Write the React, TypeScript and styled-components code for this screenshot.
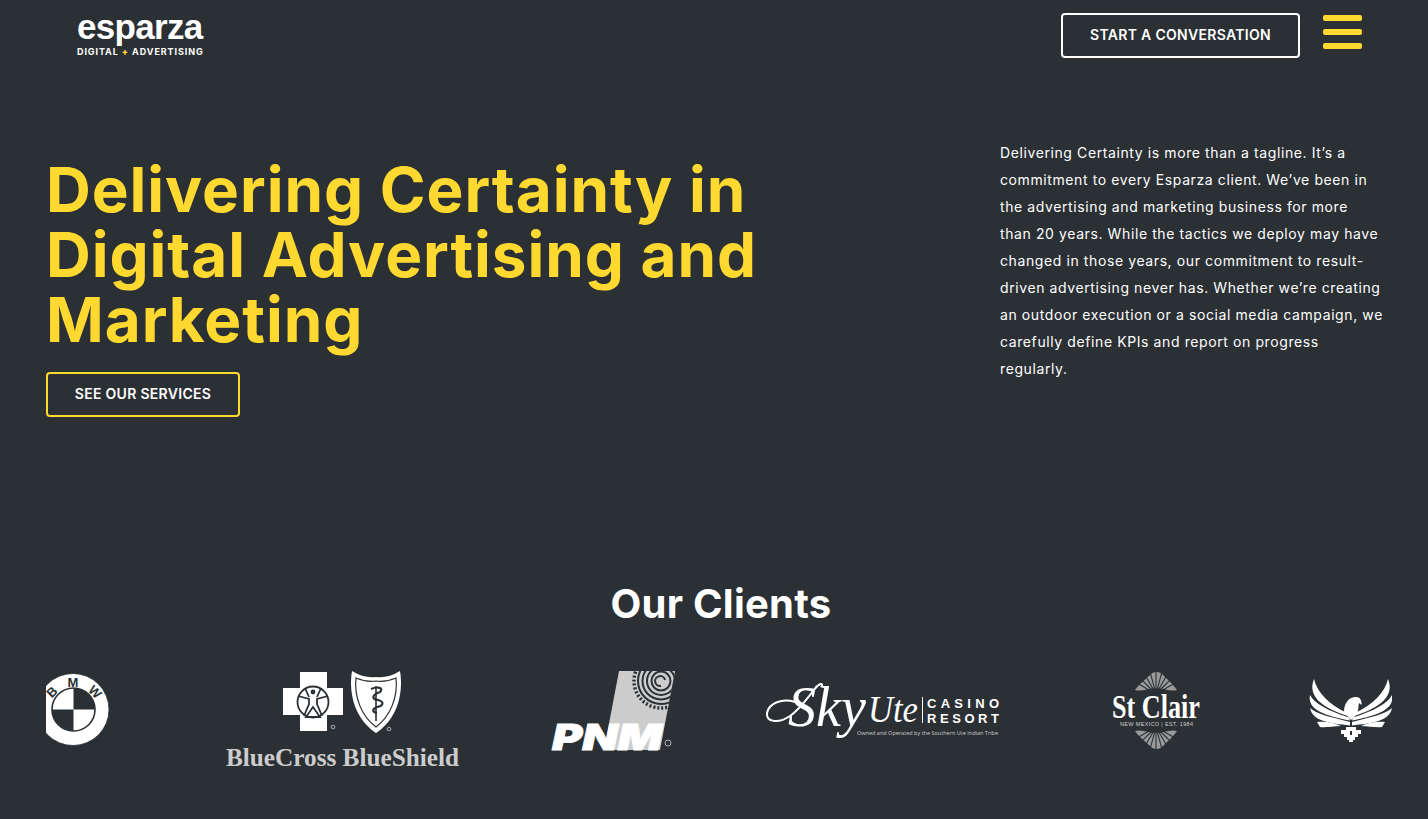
import React from 'react';
import styled, { createGlobalStyle } from 'styled-components';

const BG = '#2b3035';
const YELLOW = '#ffd92f';
const GRAY = '#cccccc';

const GlobalStyle = createGlobalStyle`
  html, body {
    margin: 0;
    padding: 0;
    background: ${BG};
  }
  * {
    box-sizing: border-box;
  }
`;

const Page = styled.div`
  width: 1428px;
  height: 819px;
  overflow: hidden;
  background: ${BG};
  color: #fff;
  font-family: Inter, 'Liberation Sans', sans-serif;
`;

const Header = styled.header`
  display: flex;
  justify-content: space-between;
  align-items: flex-start;
  padding: 13px 66px 0 77px;
  height: 139px;
`;

const Brand = styled.a`
  display: flex;
  flex-direction: column;
  width: 128px;
`;

const BrandName = styled.span`
  font-family: 'Liberation Sans', sans-serif;
  font-size: 35px;
  font-weight: 700;
  line-height: 28px;
  letter-spacing: -0.7px;
  color: #fff;
`;

const BrandTag = styled.span`
  margin-top: 6px;
  font-size: 9px;
  font-weight: 700;
  line-height: 10px;
  letter-spacing: 0.92px;
  white-space: nowrap;
  b {
    color: ${YELLOW};
  }
`;

const HeaderActions = styled.div`
  display: flex;
  align-items: flex-start;
  gap: 23px;
`;

const OutlineButton = styled.a<{ $accent: string; $width: number }>`
  display: flex;
  align-items: center;
  justify-content: center;
  width: ${(p) => p.$width}px;
  height: 45px;
  padding-bottom: 2px;
  border: 2px solid ${(p) => p.$accent};
  border-radius: 4px;
  color: #fff;
  font-size: 14px;
  font-weight: 600;
  letter-spacing: 0.3px;
  white-space: nowrap;
`;

const Burger = styled.button`
  display: flex;
  flex-direction: column;
  gap: 8px;
  width: 39px;
  margin-top: 2px;
  padding: 0;
  border: 0;
  background: none;
  span {
    display: block;
    height: 6px;
    border-radius: 2px;
    background: ${YELLOW};
  }
`;

const Hero = styled.section`
  display: flex;
  justify-content: space-between;
  padding: 0 36px 0 46px;
  height: 440px;
`;

const HeroLeft = styled.div`
  width: 760px;
  padding-top: 18px;
`;

const Headline = styled.h1`
  margin: 0 0 20px;
  font-size: 62px;
  font-weight: 700;
  line-height: 65px;
  letter-spacing: 0.95px;
  color: ${YELLOW};
`;

const Lede = styled.p`
  width: 392px;
  margin: 0;
  font-size: 14px;
  line-height: 27px;
  letter-spacing: 0.6px;
  color: #fff;
`;

const Clients = styled.section`
  display: flex;
  flex-direction: column;
  padding: 0 36px 0 46px;
`;

const ClientsTitle = styled.h2`
  margin: 0 0 41px;
  padding-left: 4px;
  text-align: center;
  font-size: 40px;
  font-weight: 700;
  line-height: 50px;
  letter-spacing: 0.25px;
  color: #fff;
`;

const Strip = styled.div`
  overflow: hidden;
`;

const Track = styled.div`
  display: flex;
  align-items: flex-start;
  margin-left: -9px;
`;

const LogoSlot = styled.svg<{ $gap: number }>`
  display: block;
  flex: none;
  height: 100px;
  margin-left: ${(p) => p.$gap}px;
  overflow: visible;
`;

const FAN_RAYS = [-60, -45, -30, -15, 0, 15, 30, 45, 60];

function BmwLogo() {
  const letter = {
    fill: BG,
    fontFamily: "'Liberation Sans', sans-serif",
    fontWeight: 700,
    fontSize: 13,
    textAnchor: 'middle' as const,
    y: 4.5,
  };
  return (
    <LogoSlot $gap={0} width="74" viewBox="37 670 74 100">
      <circle cx="73" cy="709.500" r="36" fill="#fff" stroke={BG} strokeWidth="0.800" />
      <circle cx="73.500" cy="709.500" r="21.500" fill="#fff" stroke={BG} strokeWidth="1.600" />
      <path d="M73.500 709.500 V688 A21.500 21.500 0 0 1 95 709.500 Z" fill={BG} />
      <path d="M73.500 709.500 V731 A21.500 21.500 0 0 1 52 709.500 Z" fill={BG} />
      <text {...letter} transform="translate(52 692) rotate(-45)">B</text>
      <text {...letter} transform="translate(73 682.500)">M</text>
      <text {...letter} transform="translate(95 692) rotate(45)">W</text>
    </LogoSlot>
  );
}

function BlueCrossLogo() {
  return (
    <LogoSlot $gap={115} width="235" viewBox="226 670 235 100">
      <path d="M300 672 H327 V688 H343 V715 H327 V731 H300 V715 H283 V688 H300 Z" fill="#fff" />
      <circle cx="313" cy="702" r="15.500" fill="#fff" stroke={BG} strokeWidth="1.800" />
      <g stroke={BG} strokeWidth="1.800" fill="none">
        <path d="M298 696 L309 699 V704 L304 716 M328 696 L317 699 V704 L322 716" />
        <path d="M305 688 L309 697 M321 688 L317 697" />
        <path d="M313 707 L306 717 H320 Z" />
      </g>
      <circle cx="313" cy="692" r="2.400" fill={BG} />
      <circle cx="333" cy="727" r="1.800" fill="none" stroke={GRAY} strokeWidth="0.800" />
      <path d="M352 671 C360 676 368 678 376 677 C384 678 392 676 400 671 C404 695 396 720 376 733 C356 720 348 695 352 671 Z" fill="#fff" />
      <path d="M356 678 C363 681 370 682 376 681 C382 682 389 681 396 678 C398 696 391 716 376 727 C361 716 354 696 356 678 Z" fill="none" stroke={BG} strokeWidth="1.200" />
      <path d="M371 689 C378 686 384 688 380 692 C372 695 371 699 378 700 C385 702 383 706 377 707 C372 709 372 712 377 713" fill="none" stroke={BG} strokeWidth="2.200" />
      <path d="M376 686 V721" stroke={BG} strokeWidth="1.600" />
      <circle cx="389" cy="729" r="1.800" fill="none" stroke={GRAY} strokeWidth="0.800" />
      <text x="226" y="766" fill={GRAY} fontFamily="'Liberation Serif', serif" fontWeight="700" fontSize="26" textLength="233" lengthAdjust="spacingAndGlyphs">
        BlueCross BlueShield
      </text>
    </LogoSlot>
  );
}

function PnmLogo() {
  return (
    <LogoSlot $gap={89} width="125" viewBox="550 670 125 100">
      <defs>
        <clipPath id="pnm-band">
          <path d="M619 671 H675 L660 750 H604 Z" />
        </clipPath>
      </defs>
      <path d="M619 671 H675 L660 750 H604 Z" fill={GRAY} />
      <g clipPath="url(#pnm-band)" fill="none" stroke={BG}>
        <circle cx="661" cy="681" r="27" strokeWidth="3.500" strokeDasharray="2 2" />
        <circle cx="661" cy="681" r="23" strokeWidth="2" />
        <circle cx="661" cy="681" r="18.500" strokeWidth="2" />
        <circle cx="661" cy="681" r="14" strokeWidth="2" />
        <circle cx="661" cy="681" r="9.500" strokeWidth="2" />
        <path d="M661 686 A5 5 0 1 1 665 680" strokeWidth="2" />
      </g>
      <text x="552" y="750" fill="#fff" stroke="#fff" strokeWidth="0.800" fontFamily="Inter, sans-serif" fontWeight="900" fontStyle="italic" fontSize="36" textLength="110" lengthAdjust="spacingAndGlyphs">
        PNM
      </text>
      <circle cx="668" cy="743" r="3" fill="none" stroke={GRAY} strokeWidth="0.800" />
    </LogoSlot>
  );
}

function SkyUteLogo() {
  return (
    <LogoSlot $gap={90} width="236" viewBox="765 670 236 100">
      <path d="M795 702 C782 698 769 703 767 713 C766 722 778 724 790 716 C799 710 806 700 814 690 C818 684 823 682 822 686" fill="none" stroke="#fff" strokeWidth="2" />
      <text x="788" y="726" fill="#fff" fontFamily="'Liberation Serif', serif" fontStyle="italic" fontSize="58" textLength="78" lengthAdjust="spacingAndGlyphs">
        Sky
      </text>
      <text x="868" y="722" fill="#fff" fontFamily="'Liberation Serif', serif" fontStyle="italic" fontSize="38" textLength="50" lengthAdjust="spacingAndGlyphs">
        Ute
      </text>
      <path d="M922.500 697 V723" stroke="#fff" strokeWidth="1" />
      <text x="927" y="708" fill="#fff" fontFamily="'Liberation Sans', sans-serif" fontWeight="700" fontSize="13" textLength="72">
        CASINO
      </text>
      <text x="927" y="723" fill="#fff" fontFamily="'Liberation Sans', sans-serif" fontWeight="700" fontSize="13" textLength="72">
        RESORT
      </text>
      <text x="857" y="734.500" fill={GRAY} fontFamily="'Open Sans', sans-serif" fontSize="5.500" textLength="141" lengthAdjust="spacingAndGlyphs">
        Owned and Operated by the Southern Ute Indian Tribe
      </text>
    </LogoSlot>
  );
}

function Fan({ flip }: { flip?: boolean }) {
  return (
    <g transform={flip ? 'translate(0 1421) scale(1 -1)' : undefined}>
      <path d="M1135 690 C1140 683 1146 679 1150 675 C1153 671 1160 671 1163 675 C1167 679 1172 683 1177 690 C1170 692 1163 688 1156 688 C1149 688 1142 692 1135 690 Z" fill="#9a9a9a" />
      {FAN_RAYS.map((a) => (
        <path key={a} d="M1156 688 V670" stroke={BG} strokeWidth="1.100" transform={`rotate(${a} 1156 694)`} />
      ))}
    </g>
  );
}

function StClairLogo() {
  return (
    <LogoSlot $gap={109} width="92" viewBox="1110 670 92 100">
      <Fan />
      <Fan flip />
      <text x="1112" y="718" fill="#fff" fontFamily="'Liberation Serif', serif" fontWeight="700" fontSize="34" textLength="88" lengthAdjust="spacingAndGlyphs">
        St Clair
      </text>
      <text x="1120" y="726" fill={GRAY} fontFamily="'Liberation Sans', sans-serif" fontSize="5.500" textLength="73">
        NEW MEXICO | EST. 1984
      </text>
    </LogoSlot>
  );
}

function EagleWing() {
  return (
    <g fill="#fff">
      <path d="M1314 679 C1317 692 1328 704 1347 713 L1348 716 C1322 708 1307 696 1314 679 Z" />
      <path d="M1310 695 C1314 703 1328 711 1349 717.500 L1350 720.500 C1326 716 1307 710 1310 695 Z" />
      <path d="M1310 708 C1316 714 1331 717 1350 722 L1350 725.500 C1330 723 1313 722 1310 708 Z" />
      <path d="M1317 722 C1326 721 1334 723 1341 726 C1333 726 1325 728 1320 727 Z" />
    </g>
  );
}

function EagleLogo() {
  return (
    <LogoSlot $gap={107} width="84" viewBox="1309 670 84 100">
      <EagleWing />
      <g transform="translate(2702 0) scale(-1 1)">
        <EagleWing />
      </g>
      <path d="M1344 712 C1344 703 1349 697 1356 697 C1360 697 1362 700 1361.500 705 L1359 703 C1358 707 1359 711 1356 715 L1351 720 Z" fill="#fff" />
      <path d="M1346 727 H1356 V730 H1361 V734 H1358 V737 H1355 V740 H1353 V742 H1349 V740 H1347 V737 H1344 V734 H1341 V730 H1346 Z" fill="#fff" />
      <path d="M1351 731 V735" stroke={BG} strokeWidth="2" />
    </LogoSlot>
  );
}

export default function App(): JSX.Element {
  return (
    <Page>
      <GlobalStyle />
      <Header>
        <Brand>
          <BrandName>esparza</BrandName>
          <BrandTag>
            DIGITAL <b>+</b> ADVERTISING
          </BrandTag>
        </Brand>
        <HeaderActions>
          <OutlineButton $accent="#fff" $width={239}>
            START A CONVERSATION
          </OutlineButton>
          <Burger aria-label="Menu">
            <span />
            <span />
            <span />
          </Burger>
        </HeaderActions>
      </Header>
      <Hero>
        <HeroLeft>
          <Headline>Delivering Certainty in Digital Advertising and Marketing</Headline>
          <OutlineButton $accent={YELLOW} $width={194}>
            SEE OUR SERVICES
          </OutlineButton>
        </HeroLeft>
        <Lede>
          Delivering Certainty is more than a tagline. It’s a commitment to every Esparza client.
          We’ve been in the advertising and marketing business for more
          <br />
          than 20 years. While the tactics we deploy may have changed in those years, our
          commitment to result-driven advertising never has. Whether we’re creating an outdoor
          execution or a social media campaign, we carefully define KPIs and report on progress
          <br />
          regularly.
        </Lede>
      </Hero>
      <Clients>
        <ClientsTitle>Our Clients</ClientsTitle>
        <Strip>
          <Track>
            <BmwLogo />
            <BlueCrossLogo />
            <PnmLogo />
            <SkyUteLogo />
            <StClairLogo />
            <EagleLogo />
          </Track>
        </Strip>
      </Clients>
    </Page>
  );
}
